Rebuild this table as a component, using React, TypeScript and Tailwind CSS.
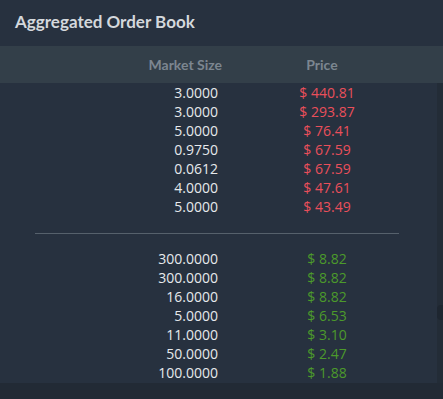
import React from 'react'

const asks: [string, string][] = [
  ['3.0000', '440.81'],
  ['3.0000', '293.87'],
  ['5.0000', '76.41'],
  ['0.9750', '67.59'],
  ['0.0612', '67.59'],
  ['4.0000', '47.61'],
  ['5.0000', '43.49'],
]

const bids: [string, string][] = [
  ['300.0000', '8.82'],
  ['300.0000', '8.82'],
  ['16.0000', '8.82'],
  ['5.0000', '6.53'],
  ['11.0000', '3.10'],
  ['50.0000', '2.47'],
  ['100.0000', '1.88'],
]

function Row({ size, price, side }: { size: string; price: string; side: 'ask' | 'bid' }) {
  return (
    <div className="grid grid-cols-[218px_59px_100px] h-[19px] leading-[19px] text-[14px]">
      <span className="text-right text-[#e6e9ec]">{size}</span>
      <span />
      <span className={side === 'ask' ? 'text-center text-[#ea4f5b]' : 'text-center text-[#4c9a2b]'}>
        $ {price}
      </span>
    </div>
  )
}

export default function App() {
  return (
    <div className="w-[443px] h-[399px] bg-[#222a35] overflow-hidden" style={{ fontFamily: "'Open Sans', sans-serif" }}>
      <div className="h-[383px] flex flex-col bg-[#27313f]">
        {/* Title */}
        <div
          className="h-[46px] pl-[15px] pt-[9px] text-[17px] font-bold text-[#d4d8dc]"
          style={{ fontFamily: 'Lato, sans-serif' }}
        >
          Aggregated Order Book
        </div>

        {/* Column headers */}
        <div
          className="h-[37px] bg-[#333f49] grid grid-cols-[222px_50px_100px] items-center text-[14px] font-bold text-[#7c8690]"
          style={{ fontFamily: 'Lato, sans-serif' }}
        >
          <span className="text-right">Market Size</span>
          <span />
          <span className="text-center">Price</span>
        </div>

        <div className="flex flex-1">
          <div className="flex-1 flex flex-col">
            <div>
              {asks.map(([s, p], i) => (
                <Row key={i} size={s} price={p} side="ask" />
              ))}
            </div>
            <div className="ml-[35px] mr-[38px] mt-[17px] mb-[15px] h-px bg-[#56616c]" />
            <div>
              {bids.map(([s, p], i) => (
                <Row key={i} size={s} price={p} side="bid" />
              ))}
            </div>
          </div>
          {/* scrollbar track */}
          <div className="w-[6px] bg-[#232c37] flex flex-col">
            <div className="h-[222px]" />
            <div className="h-[15px] rounded-l-[4px] bg-[#1e2630]" />
          </div>
        </div>
      </div>
    </div>
  )
}
